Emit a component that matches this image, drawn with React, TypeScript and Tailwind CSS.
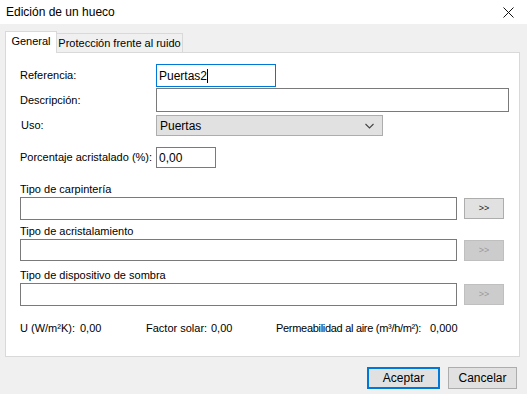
import React from 'react';

const font = { fontFamily: '"Liberation Sans", Arial, sans-serif' };

const BrowseButton: React.FC<{ disabled?: boolean }> = ({ disabled }) => (
  <button
    className={
      disabled
        ? 'ml-[7px] mt-px w-[40px] h-[21px] bg-[#cccccc] border border-[#bfbfbf] text-[#9a9a9a] text-[9px] leading-none'
        : 'ml-[7px] mt-px w-[40px] h-[21px] bg-[#e1e1e1] border border-[#adadad] text-[#1a1a1a] text-[9px] leading-none'
    }
  >
    &gt;&gt;
  </button>
);

const LookupRow: React.FC<{ label: string; mt: string; disabled?: boolean; h: string }> = ({ label, mt, disabled, h }) => (
  <div className={mt}>
    <div className="h-[14px] leading-[14px]">{label}</div>
    <div className="mt-px flex items-start">
      <div className={`w-[437px] ${h} border border-[#7a7a7a] bg-white`} />
      <BrowseButton disabled={disabled} />
    </div>
  </div>
);

export default function App() {
  return (
    <div className="w-[527px] h-[394px] bg-[#f0f0f0] flex flex-col text-[11px] text-black" style={font}>
      {/* title bar */}
      <div className="h-[24px] bg-white flex items-center justify-between pl-[6px] pr-[13px]">
        <span className="text-[12px]">Edición de un hueco</span>
        <svg width="11" height="11" viewBox="0 0 11 11">
          <path d="M0.5 0.5 L10.5 10.5 M10.5 0.5 L0.5 10.5" stroke="#111" strokeWidth="1" />
        </svg>
      </div>

      {/* tabs */}
      <div className="mt-[7px] pl-[5px] flex items-end">
        <div className="relative z-10 -mb-px w-[52px] h-[22px] bg-white border border-b-0 border-[#d9d9d9] flex items-center justify-center pb-[2px]">
          General
        </div>
        <div className="w-[126px] h-[19px] border border-l-0 border-b-0 border-[#d9d9d9] flex items-center justify-center">
          Protección frente al ruido
        </div>
      </div>

      {/* panel */}
      <div className="ml-[5px] w-[515px] h-[305px] bg-white border border-[#d9d9d9] pl-[14px]">
        <div className="mt-[11px] flex items-center">
          <div className="w-[136px]">Referencia:</div>
          <div className="w-[120px] h-[23px] border border-[#0078d7] flex items-center pl-[2px] text-[12px]">
            Puertas2<span className="w-px h-[14px] bg-black" />
          </div>
        </div>
        <div className="mt-px flex items-center">
          <div className="w-[136px]">Descripción:</div>
          <div className="w-[353px] h-[24px] border border-[#7a7a7a]" />
        </div>
        <div className="mt-[3px] flex items-center">
          <div className="w-[136px] pl-px">Uso:</div>
          <div className="w-[227px] h-[21px] bg-[#e1e1e1] border border-[#adadad] flex items-center justify-between pl-[3px] pr-[8px] text-[12px]">
            <span>Puertas</span>
            <svg width="9" height="6" viewBox="0 0 9 6">
              <path d="M0.5 1 L4.5 5 L8.5 1" fill="none" stroke="#444" strokeWidth="1.1" />
            </svg>
          </div>
        </div>
        <div className="mt-[11px] flex items-center">
          <div className="w-[136px]">Porcentaje acristalado (%):</div>
          <div className="w-[60px] h-[21px] border border-[#7a7a7a] flex items-center pl-[2px] text-[12px]">0,00</div>
        </div>

        <LookupRow label="Tipo de carpintería" mt="mt-[14px]" h="h-[23px]" />
        <LookupRow label="Tipo de acristalamiento" mt="mt-[4px]" h="h-[22px]" disabled />
        <LookupRow label="Tipo de dispositivo de sombra" mt="mt-[7px]" h="h-[23px]" disabled />

        <div className="mt-[15px] h-[14px] flex items-center whitespace-nowrap">
          <span className="w-[60px] shrink-0">U (W/m²K):</span>
          <span className="w-[66px] shrink-0">0,00</span>
          <span className="w-[65px] shrink-0">Factor solar:</span>
          <span className="w-[65px] shrink-0">0,00</span>
          <span className="w-[154px] shrink-0 tracking-[-0.3px]">Permeabilidad al aire (m³/h/m²):</span>
          <span className="shrink-0">0,000</span>
        </div>
      </div>

      {/* footer buttons */}
      <div className="mt-[10px] pr-[10px] flex justify-end gap-[8px]">
        <button className="w-[73px] h-[22px] bg-[#e1e1e1] border-2 border-[#0078d7] text-[12px]">Aceptar</button>
        <button className="w-[69px] h-[22px] bg-[#e1e1e1] border border-[#adadad] text-[12px]">Cancelar</button>
      </div>
    </div>
  );
}
